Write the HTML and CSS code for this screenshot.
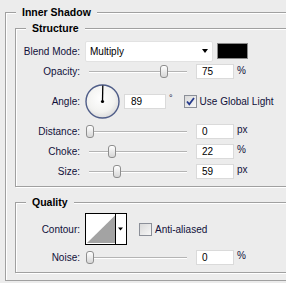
FILE: index.html
```html
<!DOCTYPE html>
<html lang="en">
<head>
    <meta charset="UTF-8">
    <meta name="viewport" content="width=device-width, initial-scale=1.0">
    <title>Inner Shadow</title>
    <link rel="stylesheet" href="styles.css">
</head>
<body>

<div class="panel">
    <div class="panel-title">Inner Shadow</div>

    <div class="group">
        <div class="group-title">Structure</div>

        <div class="row row-blend">
            <span class="label">Blend Mode:</span>
            <div class="select">Multiply<span class="arrow"></span></div>
            <div class="swatch"></div>
        </div>

        <div class="row row-opacity">
            <span class="label">Opacity:</span>
            <div class="slider"><span class="thumb" style="--v: 0.75"></span></div>
            <div class="field">75</div>
            <span class="unit">%</span>
        </div>

        <div class="row row-angle">
            <span class="label">Angle:</span>
            <svg class="dial" width="35" height="35" viewBox="0 0 35 35">
                <defs>
                    <radialGradient id="dialFill" cx="0.45" cy="0.4" r="0.6">
                        <stop offset="0" stop-color="#ffffff"/>
                        <stop offset="0.7" stop-color="#f2f2f0"/>
                        <stop offset="1" stop-color="#dcdcdc"/>
                    </radialGradient>
                </defs>
                <circle cx="17.5" cy="17.5" r="16.5" fill="url(#dialFill)" stroke="#4f5d88" stroke-width="1.4"/>
                <line x1="17.5" y1="17.5" x2="17.8" y2="1.5" stroke="#000" stroke-width="1.3"/>
                <circle cx="17.5" cy="17.5" r="1.6" fill="#000"/>
            </svg>
            <div class="field field-angle">89</div>
            <span class="degree">°</span>
            <svg class="check" width="13" height="13" viewBox="0 0 13 13">
                <defs>
                    <linearGradient id="boxFill" x1="0" y1="0" x2="1" y2="1">
                        <stop offset="0" stop-color="#d8d8d8"/>
                        <stop offset="1" stop-color="#f8f8f8"/>
                    </linearGradient>
                </defs>
                <rect x="0.5" y="0.5" width="12" height="12" fill="url(#boxFill)" stroke="#8b8f98"/>
                <path d="M3 6.5 L5.3 9.3 L10 3" fill="none" stroke="#253a8c" stroke-width="1.8"/>
            </svg>
            <span class="check-label">Use Global Light</span>
        </div>

        <div class="row">
            <span class="label">Distance:</span>
            <div class="slider"><span class="thumb" style="--v: 0"></span></div>
            <div class="field">0</div>
            <span class="unit">px</span>
        </div>

        <div class="row">
            <span class="label">Choke:</span>
            <div class="slider"><span class="thumb" style="--v: 0.22"></span></div>
            <div class="field">22</div>
            <span class="unit">%</span>
        </div>

        <div class="row">
            <span class="label">Size:</span>
            <div class="slider"><span class="thumb" style="--v: 0.275"></span></div>
            <div class="field">59</div>
            <span class="unit">px</span>
        </div>
    </div>

    <div class="group group-quality">
        <div class="group-title">Quality</div>

        <div class="row row-contour">
            <span class="label">Contour:</span>
            <svg class="contour" width="42" height="32" viewBox="0 0 42 32">
                <rect x="0.5" y="0.5" width="41" height="31" fill="#fff" stroke="#000"/>
                <polygon points="2,30 30.5,2 30.5,30" fill="#a3a3a3"/>
                <line x1="30.5" y1="1" x2="30.5" y2="31" stroke="#000"/>
                <polygon points="33,14.5 38,14.5 35.5,17.5" fill="#000"/>
            </svg>
            <svg class="check check-off" width="13" height="13" viewBox="0 0 13 13">
                <defs>
                    <linearGradient id="boxFill2" x1="0" y1="0" x2="1" y2="1">
                        <stop offset="0" stop-color="#d8d8d8"/>
                        <stop offset="1" stop-color="#f8f8f8"/>
                    </linearGradient>
                </defs>
                <rect x="0.5" y="0.5" width="12" height="12" fill="url(#boxFill2)" stroke="#8b8f98"/>
            </svg>
            <span class="check-label">Anti-aliased</span>
        </div>

        <div class="row row-noise">
            <span class="label">Noise:</span>
            <div class="slider"><span class="thumb" style="--v: 0"></span></div>
            <div class="field">0</div>
            <span class="unit">%</span>
        </div>
    </div>
</div>

</body>
</html>
```

FILE: styles.css
```css
body {
    margin: 0;
    background-color: #ececec;
    font-family: 'Liberation Sans', Arial, sans-serif;
    font-size: 10px;
    color: #10103a;
    overflow: hidden;
}

.panel {
    margin: 12px 0 0 5px;
    width: 330px;
    padding-bottom: 7px;
    border: 1px solid #a0a0a0;
    box-shadow: inset 1px 1px 0 #fff, 1px 1px 0 #fff;
}

.panel-title,
.group-title {
    width: fit-content;
    margin: -7px 0 0 10px;
    padding: 0 6px;
    height: 13px;
    line-height: 13px;
    font-size: 10.5px;
    font-weight: bold;
    color: #000;
    background-color: #ececec;
}

.group {
    margin: 9px 0 0 9px;
    padding-bottom: 5px;
    border: 1px solid #a0a0a0;
    box-shadow: inset 1px 1px 0 #fff, 1px 1px 0 #fff;
}

.group-title {
    margin-bottom: 5px;
}

.group-quality {
    margin-top: 15px;
}

.group-quality .group-title {
    margin-bottom: 4px;
}

.row {
    display: flex;
    align-items: center;
    height: 20px;
}

.row-blend {
    height: 22px;
}

.row-opacity {
    height: 19px;
}

.row-angle {
    height: 40px;
}

.row-contour {
    height: 32px;
}

.row-noise {
    margin-top: 2px;
}

.label {
    width: 64px;
    margin-right: 5px;
    text-align: right;
    white-space: nowrap;
}

.select {
    display: flex;
    justify-content: space-between;
    align-items: center;
    box-sizing: border-box;
    width: 128px;
    height: 21px;
    padding: 0 4px;
    background-color: #fff;
    border: 1px solid #e2e2e2;
    border-radius: 2px;
    color: #000;
}

.arrow {
    width: 0;
    height: 0;
    border-top: 4px solid #000;
    border-left: 3.5px solid transparent;
    border-right: 3.5px solid transparent;
}

.swatch {
    box-sizing: border-box;
    width: 31px;
    height: 16px;
    margin-left: 4px;
    background-color: #000;
    border: 1px solid #8a8a8a;
}

.slider {
    position: relative;
    width: 102px;
    height: 13px;
}

.slider::before {
    content: "";
    position: absolute;
    left: 4px;
    right: 0;
    top: 6px;
    height: 1px;
    background-color: #b4b4b4;
    border-bottom: 1px solid #fff;
}

.thumb {
    position: absolute;
    top: 0;
    left: calc(1px + var(--v) * 99px);
    box-sizing: border-box;
    width: 8px;
    height: 13px;
    border: 1px solid #8e8e8e;
    border-radius: 3px;
    background: linear-gradient(#ffffff, #d6d6d6);
}

.field {
    box-sizing: border-box;
    width: 38px;
    height: 15px;
    margin-left: 9px;
    padding-left: 5px;
    line-height: 13px;
    background-color: #fff;
    border: 1px solid #dadada;
    color: #000;
}

.field-angle {
    width: 42px;
    margin-left: 4px;
    padding-left: 6px;
}

.unit {
    margin-left: 3px;
    margin-bottom: 3px;
}

.degree {
    align-self: flex-start;
    margin: 12px 0 0 3px;
    font-size: 9px;
}

.check {
    margin-left: 11px;
}

.check-off {
    margin-left: 12px;
}

.check-label {
    margin-left: 3px;
    white-space: nowrap;
}

.dial {
    display: block;
}
```
